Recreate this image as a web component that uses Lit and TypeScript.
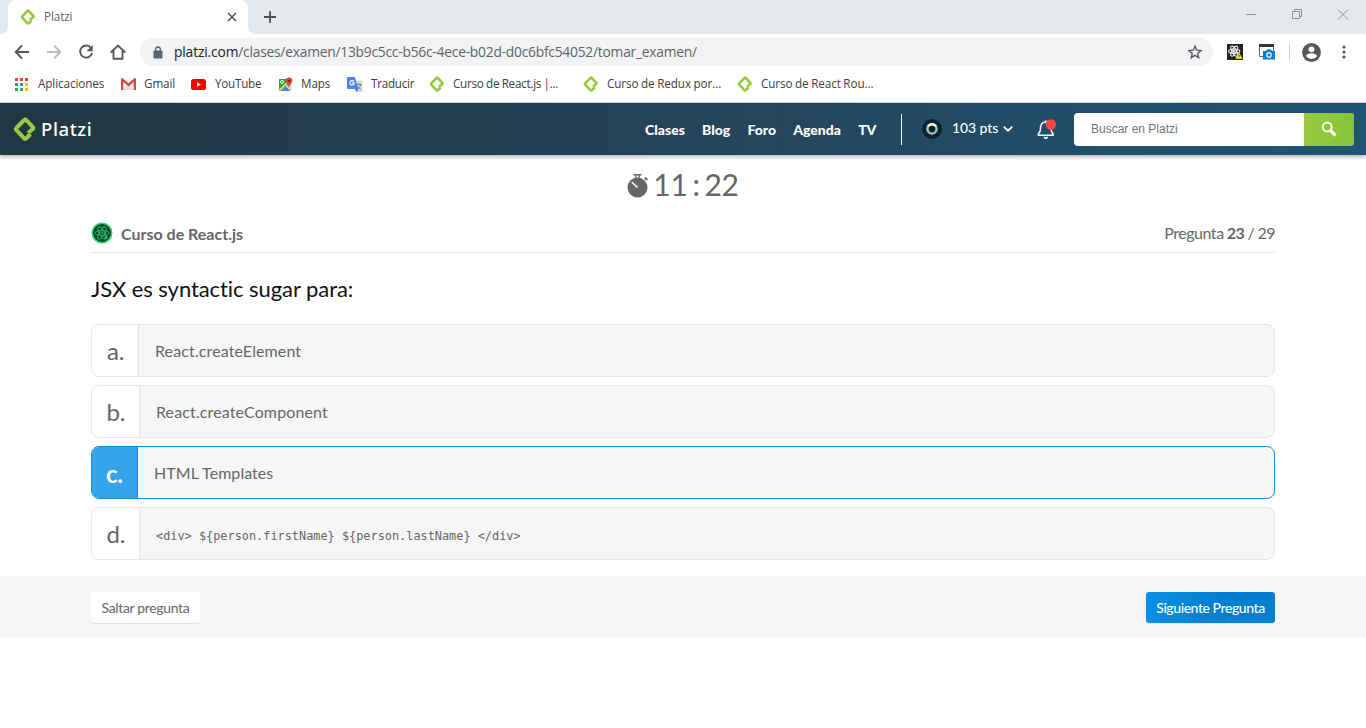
import { LitElement, html, css, svg } from "lit";
import { customElement, state } from "lit/decorators.js";

const logo = (size: number) => html`<svg class="logo" width=${size} height=${size} viewBox="0 0 24 24" fill="none" stroke="#98ca3f" stroke-width="4" stroke-linejoin="round"><path d="M15 16 20.300 11.500 20.300 10.600 13.200 3a1.600 1.600 0 0 0-2 0L3.300 11a1.600 1.600 0 0 0 0 2l7.700 8.200a1.600 1.600 0 0 0 2.200 0l3.200-2.700-1.700-1.900"/></svg>`;

const atom = svg`<g fill="none"><ellipse cx="10" cy="10" rx="7" ry="2.7"/><ellipse cx="10" cy="10" rx="7" ry="2.7" transform="rotate(60 10 10)"/><ellipse cx="10" cy="10" rx="7" ry="2.7" transform="rotate(120 10 10)"/><circle cx="10" cy="10" r="1.2"/></g>`;

const appsIcon = html`<svg width="13" height="13" viewBox="0 0 13 13"><path fill="#ea4335" d="M0 0h3v3H0zM5 0h3v3H5zM10 0h3v3h-3z"/><path fill="#34a853" d="M0 5h3v3H0zM0 10h3v3H0zM5 10h3v3H5z"/><path fill="#4285f4" d="M5 5h3v3H5z"/><path fill="#fbbc04" d="M10 5h3v3h-3zM10 10h3v3h-3z"/></svg>`;
const gmailIcon = html`<svg width="15" height="12" viewBox="0 0 15 12"><path fill="#f3f3f3" d="M1 0h13v12H1z"/><path fill="#ddd" d="M2 12l5.500-6 5.500 6z"/><path fill="#d54c3f" d="M0 1.300Q0 0 1.300 0L7.500 5.300 13.700 0Q15 0 15 1.300V12H12.700V4L7.500 8.400 2.300 4V12H0z"/></svg>`;
const youtubeIcon = html`<svg width="15" height="11" viewBox="0 0 15 11"><rect width="15" height="11" rx="2.600" fill="#f00"/><path fill="#fff" d="M6 3.200v4.600l4-2.300z"/></svg>`;
const mapsIcon = html`<svg width="15" height="15" viewBox="0 0 15 15"><path fill="#2ba24c" d="M1 2h12v12H1z"/><path fill="#4285f4" d="M2 14l5.500-5.500L13 14z"/><path fill="#d5d9dc" d="M8.500 9 12 6l1.500 1v6.500z"/><path stroke="#fbd34b" stroke-width="1.800" d="M1 14 9.500 5.500"/><path stroke="#fff" stroke-width=".8" d="m7.500 8.500 5.500 5.500"/><circle cx="4" cy="5" r="1.500" fill="none" stroke="#fff"/><path fill="#dc4437" d="M11 .500a3.300 3.300 0 0 1 3.300 3.300C14.300 6 12 7 11 10.500 10 7 7.700 6 7.700 3.800A3.300 3.300 0 0 1 11 .500z"/><circle cx="11" cy="3.800" r="1.100" fill="#7c231b"/></svg>`;
const translateIcon = html`<svg width="16" height="15" viewBox="0 0 16 15"><path fill="#d7dadd" d="M7 3.500h8.500V15H9z"/><path fill="none" stroke="#7b8890" d="M9 7.500h6M12 6v1.500M14 7.500q-1 3-4 5M10.500 9q1 2 3.500 3.500"/><path fill="#4a86e8" d="M0 1Q0 0 1 0h6.800l3.600 12H1q-1 0-1-1z"/><path fill="#3367d6" d="M8 12h3.400L9.500 15z"/><path fill="none" stroke="#fff" stroke-width="1.100" d="M6.800 4.400A2.200 2.200 0 1 0 7.300 6H5"/></svg>`;

const bookmarks = [
  { icon: appsIcon, label: "Aplicaciones", cls: "w-apps" },
  { icon: gmailIcon, label: "Gmail", cls: "w-gmail" },
  { icon: youtubeIcon, label: "YouTube", cls: "w-yt" },
  { icon: mapsIcon, label: "Maps", cls: "w-maps" },
  { icon: translateIcon, label: "Traducir", cls: "w-tr" },
  { icon: logo(16), label: "Curso de React.js |...", cls: "w-long tight" },
  { icon: logo(16), label: "Curso de Redux por...", cls: "w-long" },
  { icon: logo(16), label: "Curso de React Rou...", cls: "w-long" },
];

@customElement("browser-chrome")
export class BrowserChrome extends LitElement {
  static styles = css`
    :host { display: block; height: 103px; background: #fff; box-sizing: border-box; border-bottom: 1px solid #d6dadd; font: 12px "Open Sans", "Noto Sans", sans-serif; color: #3c4043; }
    svg { display: block; flex: none; }
    .strip { height: 34px; background: #e5e9ec; display: flex; }
    .edge { width: 8px; background: #fff; overflow: hidden; }
    .edge i { display: block; height: 34px; background: #e5e9ec; }
    .edge.l i { border-bottom-right-radius: 8px; }
    .edge.r i { border-bottom-left-radius: 8px; }
    .tab { width: 240px; box-sizing: border-box; padding: 0 11px 0 12px; background: #fff; border-radius: 8px 8px 0 0; display: flex; align-items: center; }
    .tab span { margin: -2px 0 0 8px; flex: 1; font-size: 11.700px; letter-spacing: -.1px; color: #5f6368; }
    .plus { margin: 11px 0 0 8px; }
    .wins { margin: 8px 17px 0 auto; display: flex; gap: 34px; }
    .bar { height: 36px; display: flex; align-items: center; padding-left: 14px; }
    .bar > svg { margin-right: 16px; }
    .omni { width: 1073px; height: 28px; box-sizing: border-box; border-radius: 14px; background: #f1f3f4; display: flex; align-items: center; padding: 0 10px 0 13px; margin-left: -2px; }
    .omni .url { flex: 1; margin: -1px 0 0 11px; font-size: 13.800px; letter-spacing: -.23px; color: #5f6368; white-space: nowrap; }
    .omni b { font-weight: 400; color: #202124; letter-spacing: -.15px; }
    .marks { display: flex; height: 28px; padding: 0 0 0 15px; align-items: center; }
    .mark { display: flex; align-items: center; white-space: nowrap; font-size: 11.700px; letter-spacing: -.1px; word-spacing: -.3px; flex: none; }
    .mark span + span { margin-top: -2px; }
    .tight { letter-spacing: -.27px; }
    .w-yt, .w-tr { letter-spacing: -.25px; }
    .ic { width: 24px; flex: none; }
    .w-apps { width: 106px; } .w-apps .ic { width: 23px; }
    .w-gmail { width: 70px; } .w-gmail .ic { width: 23px; }
    .w-yt { width: 87px; } .w-maps { width: 69px; } .w-tr { width: 82px; } .w-long { width: 154px; }
    .w-maps .ic { width: 23px; }
    .sep { width: 1px; height: 16px; background: #c9ccd0; margin: 0 12px 0 -1px; }
    .bar > .ext { margin: 0 16px 0 14px; }
    .bar > .cam { margin: 0 14px 0 0; }
    .bar > .user { margin-right: 17px; }
    .bar > .dots { margin: 0 0 0 4px; }
  `;
  render() {
    return html`
      <div class="strip">
        <div class="edge l"><i></i></div>
        <div class="tab">${logo(16)}<span>Platzi</span><svg width="10" height="10" viewBox="0 0 10 10" stroke="#4d5156" stroke-width="1.500"><path d="m1 1 8 8M9 1 1 9"/></svg></div>
        <div class="edge r"><i></i></div>
        <svg class="plus" width="12" height="12" viewBox="0 0 12 12" stroke="#4d5156" stroke-width="1.800"><path d="M6 0v12M0 6h12"/></svg>
        <div class="wins">
          <svg width="12" height="12" viewBox="0 0 12 12" stroke="#8c9094"><path d="M1 6.500h10"/></svg>
          <svg width="12" height="12" viewBox="0 0 12 12" fill="none" stroke="#8c9094"><path d="M1.500 3.500h7v7h-7zM3.500 3.500v-2h7v7h-2"/></svg>
          <svg width="12" height="12" viewBox="0 0 12 12" fill="none" stroke="#8c9094"><path d="m1 1.500 10 10M11 1.500l-10 10"/></svg>
        </div>
      </div>
      <div class="bar">
        <svg width="16" height="16" viewBox="0 0 16 16" fill="none" stroke="#54585d" stroke-width="1.900"><path d="M15 8H2M8 1.500 1.700 8 8 14.500"/></svg>
        <svg width="16" height="16" viewBox="0 0 16 16" fill="none" stroke="#babcbe" stroke-width="1.900"><path d="M1 8h13M8 1.500 14.300 8 8 14.500"/></svg>
        <svg width="16" height="16" viewBox="0 0 16 16" fill="none" stroke="#54585d" stroke-width="1.900"><path d="M13 4A6 6 0 1 0 14 9"/><path fill="#54585d" stroke="none" d="M14.700 1v6.200H8.500z"/></svg>
        <svg width="16" height="16" viewBox="0 0 16 16" fill="none" stroke="#54585d" stroke-width="1.900"><path d="M.8 8.500 8 1.500l7.200 7M3.500 7v7.800h9V7"/></svg>
        <div class="omni">
          <svg width="10" height="13" viewBox="0 0 10 13"><rect x=".5" y="4.500" width="9" height="8" rx="1" fill="#5f6368"/><path d="M2.700 5V3.300a2.300 2.300 0 0 1 4.600 0V5" fill="none" stroke="#5f6368" stroke-width="1.300"/></svg>
          <span class="url"><b>platzi.com</b>/clases/examen/13b9c5cc-b56c-4ece-b02d-d0c6bfc54052/tomar_examen/</span>
          <svg width="16" height="16" viewBox="0 0 16 16" fill="none" stroke="#54585d" stroke-width="1.400"><path d="m8 2.200 1.700 4 4.300.4-3.300 2.800 1 4.300-3.700-2.300-3.700 2.300 1-4.300L2 6.600l4.300-.4z"/></svg>
        </div>
        <svg class="ext" width="16" height="16" viewBox="0 0 20 20" stroke="#eee" stroke-width="1.400"><rect width="20" height="20" fill="#222" stroke="none"/><g transform="translate(-1 -1)">${atom}</g><path fill="#ffee20" stroke="none" d="M15 10.500 19.500 18.500H10.500z"/><path stroke="#333" d="M15 13.500v2.500"/></svg>
        <svg class="cam" width="17" height="16" viewBox="0 0 17 16"><path fill="#fff" stroke="#666" d="M.5 1h14v11.500H.5z"/><path fill="#333" d="M0 0h15v3H0z"/><path fill="#0c7bd2" d="M4 7h3l1-1.500h4L13 7h3v8.500H4z"/><circle cx="10" cy="11" r="2.200" fill="none" stroke="#d9f0ff" stroke-width="1.400"/></svg>
        <div class="sep"></div>
        <svg class="user" width="19" height="19" viewBox="0 0 19 19"><circle cx="9.500" cy="9.500" r="9.400" fill="#54585d"/><circle cx="9.500" cy="6.300" r="2.900" fill="#fff"/><path fill="#fff" d="M3.800 13q1.500-2.800 5.700-2.800T15.200 13q-2.200 3.100-5.700 3.100T3.800 13z"/></svg>
        <svg class="dots" width="4" height="14" viewBox="0 0 4 14" fill="#54585d"><circle cx="2" cy="2" r="1.600"/><circle cx="2" cy="7" r="1.600"/><circle cx="2" cy="12" r="1.600"/></svg>
      </div>
      <div class="marks">${bookmarks.map((b) => html`<div class="mark ${b.cls}"><span class="ic">${b.icon}</span><span>${b.label}</span></div>`)}</div>
    `;
  }
}

@customElement("site-header")
export class SiteHeader extends LitElement {
  static styles = css`
    :host { display: flex; height: 52px; align-items: center; box-sizing: border-box; padding: 0 12px 0 13px; background: linear-gradient(90deg, #213743, #24455b 55%, #1f5475); box-shadow: 0 2px 4px rgba(0,0,0,.3); color: #fff; font: 900 14px Lato, sans-serif; position: relative; }
    svg { display: block; flex: none; }
    .brand { display: flex; align-items: center; width: 632px; flex: none; }
    .brand span { font: 500 18.500px "Noto Sans", sans-serif; letter-spacing: .6px; margin: 0 0 2px 4px; }
    nav { display: flex; gap: 17.200px; width: 256px; flex: none; margin-top: 1px; }
    .line { width: 1px; height: 31px; background: #fff; }
    .avatar { margin-left: 20px; }
    .pts { font-weight: 500; margin: -3px 4px 0 10px; width: 47px; white-space: nowrap; letter-spacing: -.1px; }
    .bell { margin-left: 24px; }
    .search { margin-left: auto; display: flex; width: 280px; height: 33px; border-radius: 4px; overflow: hidden; background: #fff; }
    .search span { flex: 1; padding: 0 17px; font: 12px/32px "Liberation Sans", sans-serif; color: #757575; }
    .go { width: 50px; background: linear-gradient(90deg, #98ca3f, #83c536); display: grid; place-items: center; }
  `;
  render() {
    return html`
      <div class="brand">${logo(24)}<span>Platzi</span></div>
      <nav>${["Clases", "Blog", "Foro", "Agenda", "TV"].map((t) => html`<span>${t}</span>`)}</nav>
      <div class="line"></div>
      <svg class="avatar" width="20" height="20" viewBox="0 0 20 20"><circle cx="10" cy="10" r="10" fill="#112232"/><circle cx="10" cy="10" r="4.600" fill="none" stroke="#a6c8b8" stroke-width="2.400"/><path d="M6 7.500A4.600 4.600 0 0 1 14 7.500" fill="none" stroke="#f3f3dd" stroke-width="2.400"/></svg>
      <span class="pts">103 pts</span>
      <svg width="10" height="6" viewBox="0 0 10 6" fill="none" stroke="#fff" stroke-width="1.800"><path d="m.7.700 4.300 4 4.300-4"/></svg>
      <svg class="bell" width="20" height="21" viewBox="0 0 20 21" fill="none" stroke="#fff" stroke-width="1.500"><path d="M1.500 16.200h14.500v-1.500q-2-1.400-2-5.200c0-4-1.700-6.500-5.200-6.500S3.500 5.500 3.500 9.500q0 3.800-2 5.200zM8.800 3V1.500M7 18q1.800 2.600 3.600 0"/><circle cx="13.800" cy="5.500" r="5.200" fill="#fb4440" stroke="none"/></svg>
      <div class="search"><span>Buscar en Platzi</span><div class="go"><svg width="16" height="16" viewBox="0 0 16 16" fill="none" stroke="#fff"><circle cx="6.200" cy="6" r="4.500" stroke-width="1.900"/><path stroke-width="3.200" d="m9.500 9.500 5 5"/></svg></div></div>
    `;
  }
}

@customElement("app-root")
export class AppRoot extends LitElement {
  @state() private selected = 2;
  static styles = css`
    :host { display: block; height: 728px; background: #fff; color: #666; font-family: Lato, sans-serif; overflow: hidden; }
    svg { display: block; flex: none; }
    .timer { display: flex; justify-content: center; align-items: center; gap: 4px; height: 60px; font-size: 30px; line-height: 36px; white-space: nowrap; word-spacing: -2.500px; letter-spacing: -.3px; }
    .timer svg { margin-top: 1px; }
    .timer span { margin-top: -2px; }
    .wrap { width: 1184px; margin: 0 auto; }
    .head { display: flex; align-items: center; height: 37px; border-bottom: 1px solid #e8e8e8; box-sizing: content-box; font-size: 16px; }
    .head svg { margin-top: -2px; }
    .head b { font-weight: 700; }
    .head .name { margin: 0 0 0 8px; flex: 1; }
    .count { margin-top: -2px; letter-spacing: -.48px; word-spacing: -.400px; }
    .count b { letter-spacing: -.6px; }
    .q { margin: 0; font-size: 22px; font-weight: 400; line-height: 30px; letter-spacing: -.07px; color: #111; padding: 21px 0 20px; }
    .opts { display: grid; gap: 8px; }
    .opt { display: flex; height: 53px; box-sizing: border-box; border: 1px solid #e6e6e6; border-radius: 8px; overflow: hidden; background: #f6f6f6; font-size: 16px; line-height: 51px; }
    .key { background: #fff; border-right: 1px solid #e6e6e6; padding: 0 15px; font-size: 24px; line-height: 51px; letter-spacing: -.3px; box-sizing: border-box; width: 47px; white-space: nowrap; }
    .w48 { width: 48px; padding: 0 14.500px; }
    .txt { padding-left: 16px; letter-spacing: .12px; }
    .on { border-color: #0791e6; }
    .on .key { background: #35a5eb; border-color: #0791e6; color: #fff; font-weight: 700; width: 46px; padding: 0 14px; line-height: 53px; }
    .on .txt { letter-spacing: .05px; }
    code { font: 11.890px "DejaVu Sans Mono", monospace; letter-spacing: 0; }
    .foot { margin-top: 16px; height: 62px; background: #f6f6f6; display: flex; align-items: center; }
    .foot .wrap { display: flex; justify-content: space-between; }
    button { font: 14px/30px Lato, sans-serif; letter-spacing: -.34px; height: 31px; padding: 1px 0 0; border: 0; border-radius: 3px; background: #fff; color: #666; box-shadow: 0 1px 1px rgba(0,0,0,.08); width: 109px; white-space: nowrap; }
    .next { width: 129px; font-weight: 500; letter-spacing: -.43px; color: #fff; background: linear-gradient(100deg, #0791e6, #037fd2 50%); }
  `;
  render() {
    const options = [html`React.createElement`, html`React.createComponent`, html`HTML Templates`, html`<code>${"<div> ${person.firstName} ${person.lastName} </div>"}</code>`];
    return html`
      <browser-chrome></browser-chrome>
      <site-header></site-header>
      <div class="timer"><svg width="22" height="24" viewBox="0 0 22 24"><circle cx="10.500" cy="13.500" r="10" fill="#666"/><path fill="#666" d="M6.500 0h8v1.400h-1.700V4h-1.300V1.400H9.500V4H8.200V1.400H6.500zM17 4.200l1.500-1.500 2.500 2.500-1.500 1.500z"/><path stroke="#fff" stroke-width="1.600" d="m4.700 8 5.800 5.500"/></svg><span>11 : 22</span></div>
      <div class="wrap">
        <div class="head">
          <svg width="22" height="22" viewBox="0 0 22 22"><circle cx="11" cy="11" r="9.700" fill="#064223" stroke="#2bd472" stroke-width="1.600"/><g transform="translate(1 1)" stroke="#35b870" stroke-width=".9">${atom}</g><circle cx="15" cy="15.500" r="1.500" fill="#35b870"/></svg>
          <b class="name">Curso de React.js</b><span class="count">Pregunta <b>23</b> / 29</span>
        </div>
        <h1 class="q">JSX es syntactic sugar para:</h1>
        <div class="opts">${options.map((o, i) => html`<div class="opt ${i === this.selected ? "on" : ""}" @click=${() => (this.selected = i)}><div class="key ${i % 2 ? "w48" : ""}">${"abcd"[i]}.</div><div class="txt">${o}</div></div>`)}</div>
      </div>
      <div class="foot"><div class="wrap"><button>Saltar pregunta</button><button class="next">Siguiente Pregunta</button></div></div>
    `;
  }
}
